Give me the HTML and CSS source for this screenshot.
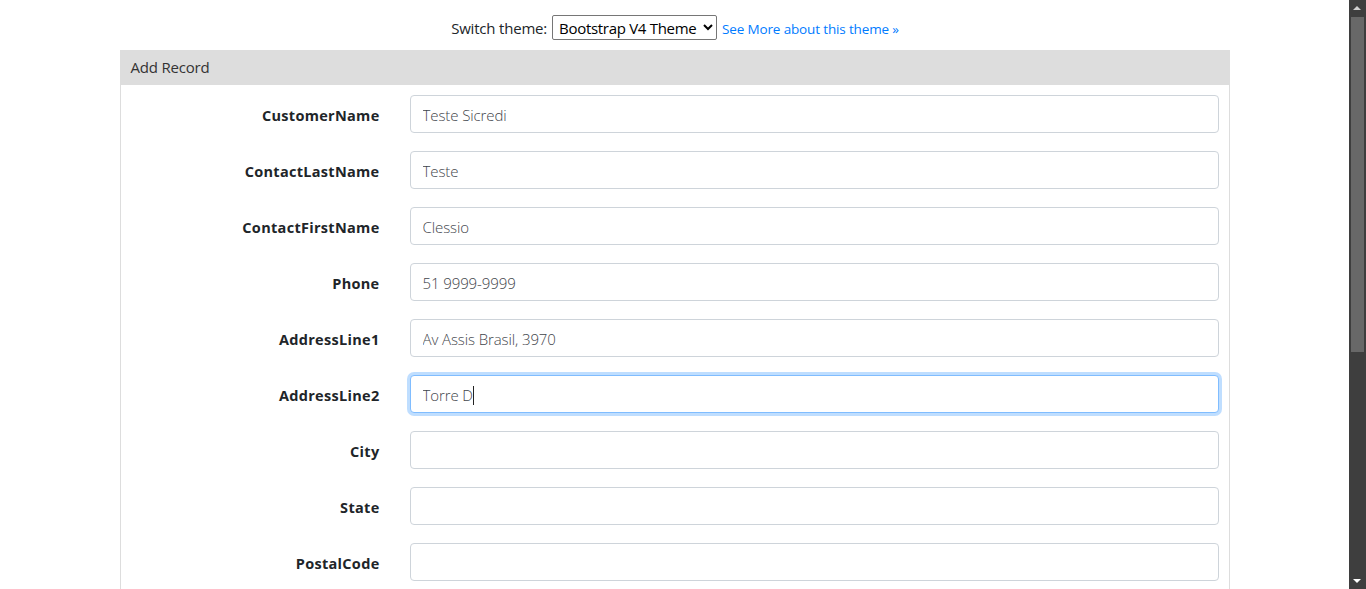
FILE: index.html
```html
<!DOCTYPE html>
<html lang="en">
<head>
<meta charset="utf-8">
<title>Add Record</title>
<link rel="stylesheet" href="styles.css">
</head>
<body>
<div class="page">
  <div class="theme-bar">
    <span class="theme-label">Switch theme:</span>
    <select class="theme-select">
      <option>Bootstrap V4 Theme</option>
    </select>
    <a class="theme-link" href="#">See More about this theme »</a>
  </div>
  <div class="container">
    <div class="card">
      <div class="card-header">Add Record</div>
      <form class="card-body">
        <div class="form-row"><label class="form-label">CustomerName</label><input class="form-input" type="text" value="Teste Sicredi"></div>
        <div class="form-row"><label class="form-label">ContactLastName</label><input class="form-input" type="text" value="Teste"></div>
        <div class="form-row"><label class="form-label">ContactFirstName</label><input class="form-input" type="text" value="Clessio"></div>
        <div class="form-row"><label class="form-label">Phone</label><input class="form-input" type="text" value="51 9999-9999"></div>
        <div class="form-row"><label class="form-label">AddressLine1</label><input class="form-input" type="text" value="Av Assis Brasil, 3970"></div>
        <div class="form-row"><label class="form-label">AddressLine2</label><div class="input-wrap"><input class="form-input is-focused" type="text" value="Torre D"><span class="caret"></span></div></div>
        <div class="form-row"><label class="form-label">City</label><input class="form-input" type="text" value=""></div>
        <div class="form-row"><label class="form-label">State</label><input class="form-input" type="text" value=""></div>
        <div class="form-row"><label class="form-label">PostalCode</label><input class="form-input" type="text" value=""></div>
      </form>
    </div>
  </div>
</div>
<div class="scrollbar">
  <div class="scroll-arrow up"></div>
  <div class="scroll-thumb"></div>
  <div class="scroll-arrow down"></div>
</div>
</body>
</html>
```
FILE: styles.css
```css
html, body {
  margin: 0;
  padding: 0;
  height: 100%;
  overflow: hidden;
  background: #fff;
}
body {
  font-family: "Open Sans", "Noto Sans", sans-serif;
  color: #212529;
  font-size: 15px;
}
.page {
  width: 1349px;
}
.theme-bar {
  height: 50px;
  box-sizing: border-box;
  padding-top: 15px;
  padding-left: 1px;
  display: flex;
  justify-content: center;
  align-items: flex-start;
  gap: 5px;
}
.theme-label {
  font-size: 15px;
  line-height: 26px;
  letter-spacing: -0.2px;
}
.theme-select {
  height: 25px;
  font-family: "Open Sans", sans-serif;
  font-size: 15px;
  letter-spacing: -0.3px;
  color: #000;
  border: 1px solid #767676;
  border-radius: 2px;
  background: #fff;
  padding: 0 0 0 2px;
  width: 165px;
}
.theme-link {
  color: #007bff;
  text-decoration: none;
  font-size: 13.5px;
  line-height: 28px;
  letter-spacing: -0.15px;
}
.container {
  width: 1110px;
  margin: 0 auto;
}
.card {
  border: 1px solid #dddddd;
  border-top: none;
}
.card-header {
  background: #dddddd;
  height: 35px;
  line-height: 34px;
  padding-left: 11px;
  margin: 0 -1px;
  font-size: 15px;
  color: #333;
  letter-spacing: -0.2px;
}
.card-body {
  padding: 10px 10px 30px 10px;
  display: flex;
  flex-direction: column;
  gap: 18px;
}
.form-row {
  display: grid;
  grid-template-columns: 249px 1fr;
  column-gap: 30px;
  align-items: center;
}
.form-label {
  text-align: right;
  font-weight: 700;
  font-size: 14.5px;
  letter-spacing: 0.3px;
  color: #212529;
  padding-top: 2px;
}
.input-wrap {
  position: relative;
}
.form-input {
  display: block;
  width: 100%;
  box-sizing: border-box;
  height: 38px;
  padding: 2px 12px 0;
  border: 1px solid #ced4da;
  border-radius: 4px;
  font-family: "Open Sans", sans-serif;
  font-weight: 300;
  font-size: 15px;
  letter-spacing: -0.1px;
  color: #3f454b;
  background: #fff;
  outline: none;
}
.form-input.is-focused {
  border-color: #80bdff;
  box-shadow: 0 0 0 3px rgba(0, 123, 255, 0.25);
}
.caret {
  position: absolute;
  left: 63px;
  top: 11px;
  width: 1px;
  height: 19px;
  background: #222;
}
.scrollbar {
  position: fixed;
  top: 0;
  right: 0;
  width: 17px;
  height: 100%;
  background: #3e3e3e;
}
.scroll-thumb {
  position: absolute;
  left: 2px;
  right: 2px;
  top: 17px;
  height: 335px;
  background: #686868;
}
.scroll-arrow {
  position: absolute;
  left: 4px;
  width: 0;
  height: 0;
  border-left: 4px solid transparent;
  border-right: 4px solid transparent;
}
.scroll-arrow.up {
  top: 6px;
  border-bottom: 4px solid #d0d0d0;
}
.scroll-arrow.down {
  bottom: 6px;
  border-top: 4px solid #ffffff;
}
```
